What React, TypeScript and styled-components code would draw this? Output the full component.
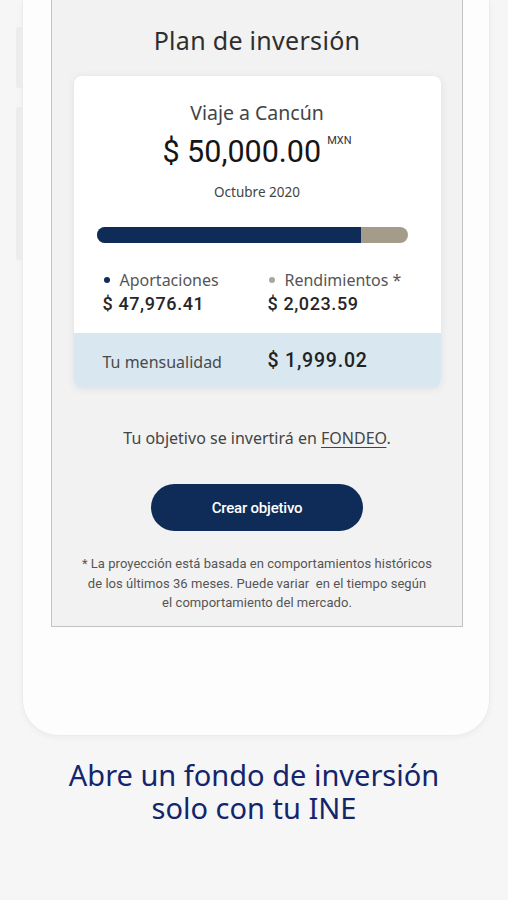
import React from 'react';
import styled, {createGlobalStyle} from 'styled-components';

const GlobalStyle = createGlobalStyle`
  html, body {
    margin: 0;
    padding: 0;
    background: #f6f6f7;
  }
  body {
    font-family: Roboto, "Noto Sans", sans-serif;
    color: #333;
  }
`;

const Page = styled.div`
  width: 508px;
  height: 900px;
  overflow: hidden;
  display: flex;
  flex-direction: column;
  background: #f6f6f7;
`;

const Phone = styled.div`
  position: relative;
  width: 468px;
  margin-left: 22px;
  padding: 0 26px 108px 28px;
  box-sizing: border-box;
  background: #fdfdfd;
  border: 1px solid #ebebec;
  border-top: none;
  border-radius: 0 0 36px 36px;
  box-shadow: 0 2px 6px rgba(0, 0, 0, 0.04);
`;

interface SideKeyProps {
  readonly top: number;
  readonly length: number;
};

const SideKey = styled.span<SideKeyProps>`
  position: absolute;
  left: -7px;
  top: ${props => props.top}px;
  width: 6px;
  height: ${props => props.length}px;
  background: #ebecee;
  border-radius: 2px 0 0 2px;
`;

const Screen = styled.div`
  display: flex;
  flex-direction: column;
  align-items: center;
  background: #f2f2f2;
  border: 1.5px solid #c3c3c3;
  border-top: none;
  padding: 22px 0 13px;
`;

const Title = styled.h1`
  margin: 0;
  font-family: "Noto Sans", sans-serif;
  font-weight: 400;
  font-size: 25px;
  line-height: 36px;
  color: #2e2e2e;
  letter-spacing: 0.3px;
`;

const Card = styled.div`
  width: 367px;
  margin-top: 18px;
  background: #fff;
  border-radius: 8px;
  overflow: hidden;
  box-shadow: 0 1px 8px rgba(0, 0, 0, 0.08);
  display: flex;
  flex-direction: column;
  align-items: center;
  padding-top: 24px;
`;

const GoalName = styled.div`
  font-family: "Noto Sans", sans-serif;
  font-size: 19.5px;
  line-height: 26px;
  color: #444;
`;

const GoalAmount = styled.div`
  margin-top: 7px;
  font-size: 30.5px;
  line-height: 38px;
  color: #151515;
  sup {
    font-size: 11px;
    vertical-align: top;
    line-height: 16px;
    margin-left: 6px;
    color: #333;
  }
`;

const GoalDate = styled.div`
  margin-top: 12px;
  font-family: "Noto Sans", sans-serif;
  font-size: 13.5px;
  line-height: 18px;
  color: #444;
`;

const Bar = styled.div`
  align-self: stretch;
  display: flex;
  height: 16px;
  margin: 26px 33px 0 23px;
  border-radius: 8px;
  overflow: hidden;
  background: #a59b8b;
`;

interface FillProps {
  readonly color: string;
};

const Fill = styled.div<FillProps>`
  height: 100%;
  background: ${props => props.color};
`;

const Columns = styled.div`
  align-self: stretch;
  display: grid;
  grid-template-columns: 165px 1fr;
  padding: 0 0 0 29px;
`;

const Legend = styled(Columns)`
  margin-top: 27px;
  padding-bottom: 18px;
`;

const LegendItem = styled.div`
  display: flex;
  flex-direction: column;
`;

const LegendLabel = styled.div<FillProps>`
  display: flex;
  align-items: center;
  font-family: "Noto Sans", sans-serif;
  font-size: 16px;
  line-height: 20px;
  color: #555;
  &::before {
    content: "";
    width: 6px;
    height: 6px;
    border-radius: 50%;
    margin: 0 10px 0 1px;
    background: ${props => props.color};
  }
`;

const Money = styled.div`
  margin-top: 3px;
  font-size: 18px;
  line-height: 22px;
  font-weight: 500;
  color: #262626;
  letter-spacing: 0.6px;
`;

const Monthly = styled(Columns)`
  height: 55px;
  align-items: center;
  background: #d9e7f1;
`;

const MonthlyLabel = styled.div`
  font-family: "Noto Sans", sans-serif;
  font-size: 16px;
  color: #4a4a4a;
  padding-top: 3px;
`;

const MonthlyAmount = styled.div`
  font-size: 19.5px;
  font-weight: 500;
  color: #222;
  letter-spacing: 0.8px;
`;

const Destination = styled.p`
  margin: 40px 0 0;
  font-family: "Noto Sans", sans-serif;
  font-size: 16px;
  line-height: 20px;
  color: #444;
  a {
    color: #444;
    text-decoration: underline;
    text-underline-offset: 3px;
  }
`;

const CreateButton = styled.button`
  margin-top: 36px;
  width: 212px;
  height: 47px;
  border: none;
  border-radius: 24px;
  background: #0e2c57;
  color: #fff;
  font-family: Roboto, sans-serif;
  font-weight: 500;
  font-size: 15px;
  letter-spacing: -0.2px;
`;

const Disclaimer = styled.p`
  margin: 23px 0 0;
  text-align: center;
  font-size: 13px;
  line-height: 19.5px;
  letter-spacing: 0.05px;
  color: #555;
  white-space: nowrap;
`;

const Caption = styled.h2`
  margin: 19px 0 0;
  text-align: center;
  font-family: "Noto Sans", sans-serif;
  font-weight: 400;
  font-size: 29px;
  color: #13256b;
`;

const CaptionLine = styled.span`
  display: block;
  height: 33px;
  line-height: 40px;
`;

const App: React.FC = () => {
  return (
    <Page>
      <GlobalStyle />
      <Phone>
        <SideKey top={27} length={61} />
        <SideKey top={107} length={153} />
        <Screen>
          <Title>Plan de inversión</Title>
          <Card>
            <GoalName>Viaje a Cancún</GoalName>
            <GoalAmount>$ 50,000.00<sup>MXN</sup></GoalAmount>
            <GoalDate>Octubre 2020</GoalDate>
            <Bar>
              <Fill color="#0e2c57" style={{width: '85%'}} />
            </Bar>
            <Legend>
              <LegendItem>
                <LegendLabel color="#0e2c57">Aportaciones</LegendLabel>
                <Money>$ 47,976.41</Money>
              </LegendItem>
              <LegendItem>
                <LegendLabel color="#aaa89c">Rendimientos *</LegendLabel>
                <Money>$ 2,023.59</Money>
              </LegendItem>
            </Legend>
            <Monthly>
              <MonthlyLabel>Tu mensualidad</MonthlyLabel>
              <MonthlyAmount>$ 1,999.02</MonthlyAmount>
            </Monthly>
          </Card>
          <Destination>
            Tu objetivo se invertirá en <a>FONDEO</a>.
          </Destination>
          <CreateButton>Crear objetivo</CreateButton>
          <Disclaimer>
            * La proyección está basada en comportamientos históricos
            <br />
            de los últimos 36 meses. Puede variar&nbsp; en el tiempo según
            <br />
            el comportamiento del mercado.
          </Disclaimer>
        </Screen>
      </Phone>
      <Caption>
        <CaptionLine>Abre un fondo de inversión</CaptionLine>
        <CaptionLine>solo con tu INE</CaptionLine>
      </Caption>
    </Page>
  );
};

export default App;
